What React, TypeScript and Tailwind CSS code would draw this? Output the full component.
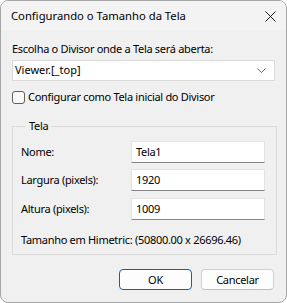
const font = { fontFamily: '"Noto Sans", "Open Sans", sans-serif' };

function TextRow({ label, value, className = "" }: { label: string; value: string; className?: string }) {
  return (
    <div className={`flex items-center ${className}`}>
      <span className="w-[110px] leading-[16px]">{label}</span>
      <div className="h-[22px] w-[134px] bg-white border border-[#e3e3e3] border-b-[#868686] flex items-center pl-[4px]">
        {value}
      </div>
    </div>
  );
}

export default function App() {
  return (
    <div className="w-[287px] h-[303px] bg-white text-black text-[11px] tracking-[-0.3px] whitespace-nowrap" style={font}>
      <div className="h-full rounded-[8px] border border-[#a6a6a6] bg-[#f0f0f0] overflow-hidden flex flex-col">
        {/* Title bar */}
        <div className="h-[30px] bg-[#f3f3f3] flex items-center justify-between pl-[10px] pr-[10px] shrink-0">
          <span className="text-[11.25px] tracking-normal leading-[16px]">Configurando o Tamanho da Tela</span>
          <svg width="11" height="11" viewBox="0 0 11 11">
            <path d="M0.5 0.5 L10.5 10.5 M10.5 0.5 L0.5 10.5" stroke="#1a1a1a" strokeWidth="1" />
          </svg>
        </div>

        {/* Body */}
        <div className="flex flex-col px-[11px] pt-[10px]">
          <span className="leading-[16px]">Escolha o Divisor onde a Tela será aberta:</span>
          <div className="mt-[3px] h-[21px] bg-white border border-[#dadada] flex items-center justify-between pl-[2px] pr-[8px]">
            <span className="tracking-normal">Viewer.[_top]</span>
            <svg width="9" height="6" viewBox="0 0 9 6">
              <path d="M0.5 0.5 L4.5 4.5 L8.5 0.5" stroke="#6b6b6b" strokeWidth="1" fill="none" />
            </svg>
          </div>

          <label className="mt-[8px] flex items-center h-[16px]">
            <span className="w-[13px] h-[13px] rounded-[3px] border border-[#5f5f5f] bg-[#f8f8f8] mr-[3px]" />
            <span className="leading-[16px]">Configurar como Tela inicial do Divisor</span>
          </label>

          <fieldset className="mt-[13px] border border-[#dcdcdc] pl-[8px] pr-[11px] pb-[6px]">
            <legend className="ml-[5px] px-[3px] leading-[16px]">Tela</legend>
            <TextRow className="mt-[7px]" label="Nome:" value="Tela1" />
            <TextRow className="mt-[6px]" label="Largura (pixels):" value="1920" />
            <TextRow className="mt-[7px]" label="Altura (pixels):" value="1009" />
            <p className="mt-[12px] leading-[16px]">Tamanho em Himetric: (50800.00 x 26696.46)</p>
          </fieldset>

          <div className="mt-[14px] flex justify-end gap-[9px] pr-[1px]">
            <button className="w-[73px] h-[21px] rounded-[4px] bg-[#fdfdfd] border border-[#0067c0] leading-[16px]">
              OK
            </button>
            <button className="w-[73px] h-[21px] rounded-[4px] bg-[#fdfdfd] border border-[#d0d0d0] border-b-[#bdbdbd] leading-[16px]">
              Cancelar
            </button>
          </div>
        </div>
      </div>
    </div>
  );
}
